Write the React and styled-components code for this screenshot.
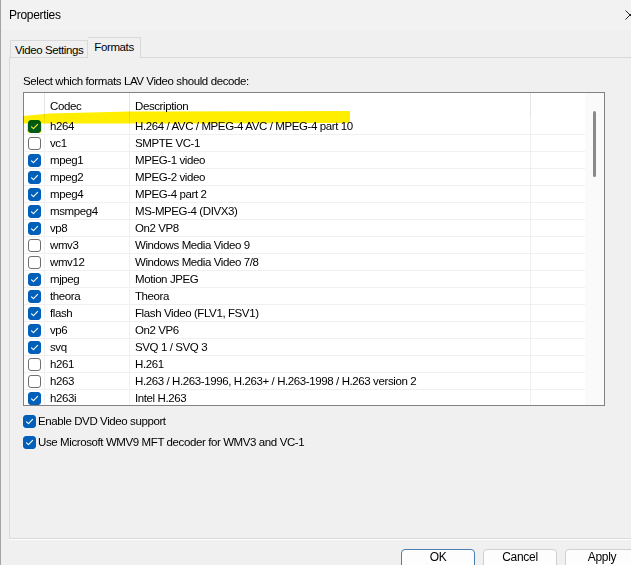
import React from "react";
import styled, { createGlobalStyle } from "styled-components";

const Global = createGlobalStyle`
  html, body { margin: 0; padding: 0; background: #f0f0f0; overflow: hidden; }
  body { font-family: "Liberation Sans", Arial, sans-serif; font-size: 11.5px; letter-spacing: -0.4px; color: #000; }
  * { box-sizing: border-box; }
`;

const Page = styled.div`
  position: relative;
  width: 631px;
  height: 565px;
`;

const Window = styled.div`
  width: 631px;
  height: 565px;
  background: #f0f0f0;
  border-left: 1px solid #a3a3a3;
  display: flex;
  flex-direction: column;
  & > * { flex-shrink: 0; }
`;

const TitleBar = styled.div`
  height: 30px;
  display: flex;
  align-items: center;
  padding-left: 8px;
  background: #f2f2f2;
`;

const Title = styled.span`
  flex: 1;
  font-size: 12px;
  letter-spacing: -0.3px;
`;

const Close = styled.svg`
  width: 10px;
  height: 10px;
  margin-right: -4px;
  margin-top: -1px;
`;

const Body = styled.div`
  padding-left: 8px;
  display: flex;
  flex-direction: column;
  & > * { flex-shrink: 0; }
`;

const TabStrip = styled.div`
  height: 27px;
  display: flex;
  align-items: flex-end;
  padding-left: 1px;
`;

const Tab = styled.div`
  height: ${(p) => (p.$active ? "21px" : "17px")};
  margin-bottom: ${(p) => (p.$active ? "-1px" : "0")};
  padding: ${(p) => (p.$active ? "2px 6px 0 6px" : "2px 4px 0 4px")};
  border: 1px solid #d9d9d9;
  border-bottom: none;
  border-left: ${(p) => (p.$active ? "none" : "1px solid #d9d9d9")};
  background: #f0f0f0;
  position: relative;
  z-index: 1;
  line-height: 14px;
`;

const Panel = styled.div`
  height: 482px;
  margin-right: -20px;
  border: 1px solid #d9d9d9;
  background: #f0f0f0;
  box-shadow: 0 1px 0 #ffffff;
  padding: 15px 0 0 13px;
  display: flex;
  flex-direction: column;
  & > * { flex-shrink: 0; }
`;

const Label = styled.div`
  line-height: 16px;
  margin-bottom: 3px;
`;

const ListBox = styled.div`
  width: 582px;
  height: 314px;
  border: 1px solid #828282;
  background: #fff;
  display: flex;
  overflow: hidden;
`;

const GridArea = styled.div`
  width: 561px;
  display: flex;
  flex-direction: column;
`;

const Row = styled.div`
  display: grid;
  grid-template-columns: 21px 85px 401px 54px;
  height: ${(p) => (p.$header ? "25px" : "17px")};
  flex: none;
  border-bottom: ${(p) => (p.$header ? "none" : "1px solid #f0f0f0")};
`;

const Cell = styled.div`
  display: flex;
  align-items: center;
  justify-content: ${(p) => (p.$center ? "center" : "flex-start")};
  padding-left: ${(p) => (p.$center ? "0" : "5px")};
  border-right: ${(p) => (p.$last ? "none" : `1px solid ${p.$header ? "#e5e5e5" : "#f0f0f0"}`)};
  white-space: nowrap;
  overflow: hidden;
  line-height: 16px;
`;

const Scrollbar = styled.div`
  width: 19px;
  background: #fafafa;
  display: flex;
  flex-direction: column;
`;

const Thumb = styled.div`
  width: 3px;
  height: 66px;
  margin: 18px 0 0 8px;
  border-radius: 2px;
  background: #8a8a8a;
`;

const Box = styled.span`
  width: 13px;
  height: 13px;
  border-radius: 3px;
  flex: none;
  display: inline-flex;
  align-items: center;
  justify-content: center;
  background: ${(p) => (p.$checked ? "#005fb8" : "#ffffff")};
  border: 1px solid ${(p) => (p.$checked ? "#005fb8" : "#6f6f6f")};
`;

const Options = styled.div`
  display: flex;
  flex-direction: column;
  gap: 5px;
  margin-top: 7px;
`;

const Option = styled.label`
  display: flex;
  align-items: center;
  gap: 2px;
  height: 16px;
  line-height: 16px;
`;

const Footer = styled.div`
  display: flex;
  justify-content: flex-end;
  gap: 8px;
  padding-top: 10px;
  margin-right: -8px;
`;

const Button = styled.button`
  width: 74px;
  height: 24px;
  border-radius: 4px;
  background: #fdfdfd;
  border: 1px solid ${(p) => (p.$default ? "#4a7fb0" : "#d0d0d0")};
  font-family: inherit;
  font-size: 12px;
  letter-spacing: -0.3px;
  line-height: 14px;
  color: #000;
  padding: 0;
  display: flex;
  align-items: flex-start;
  justify-content: center;
`;

const Highlight = styled.svg`
  position: absolute;
  left: 0;
  top: 0;
  pointer-events: none;
  mix-blend-mode: multiply;
`;

function Check({ checked }) {
  return (
    <Box $checked={checked}>
      {checked && (
        <svg width="9" height="9" viewBox="0 0 9 9">
          <path d="M1.5 4.8 L3.5 6.7 L7.6 2.4" fill="none" stroke="#fff" strokeWidth="1.1" strokeLinecap="round" strokeLinejoin="round" />
        </svg>
      )}
    </Box>
  );
}

const formats = [
  ["h264", true, "H.264 / AVC / MPEG-4 AVC / MPEG-4 part 10"],
  ["vc1", false, "SMPTE VC-1"],
  ["mpeg1", true, "MPEG-1 video"],
  ["mpeg2", true, "MPEG-2 video"],
  ["mpeg4", true, "MPEG-4 part 2"],
  ["msmpeg4", true, "MS-MPEG-4 (DIVX3)"],
  ["vp8", true, "On2 VP8"],
  ["wmv3", false, "Windows Media Video 9"],
  ["wmv12", false, "Windows Media Video 7/8"],
  ["mjpeg", true, "Motion JPEG"],
  ["theora", true, "Theora"],
  ["flash", true, "Flash Video (FLV1, FSV1)"],
  ["vp6", true, "On2 VP6"],
  ["svq", true, "SVQ 1 / SVQ 3"],
  ["h261", false, "H.261"],
  ["h263", false, "H.263 / H.263-1996, H.263+ / H.263-1998 / H.263 version 2"],
  ["h263i", true, "Intel H.263"],
];

export default function App() {
  return (
    <Page>
      <Global />
      <Window>
        <TitleBar>
          <Title>Properties</Title>
          <Close viewBox="0 0 10 10">
            <path d="M0.5 0.5 L9.5 9.5 M9.5 0.5 L0.5 9.5" stroke="#222" strokeWidth="1" />
          </Close>
        </TitleBar>
        <Body>
          <TabStrip>
            <Tab>Video Settings</Tab>
            <Tab $active>Formats</Tab>
          </TabStrip>
          <Panel>
            <Label>Select which formats LAV Video should decode:</Label>
            <ListBox>
              <GridArea>
                <Row $header>
                  <Cell $header $center />
                  <Cell $header>Codec</Cell>
                  <Cell $header>Description</Cell>
                  <Cell $header $last />
                </Row>
                {formats.map(([codec, on, desc]) => (
                  <Row key={codec}>
                    <Cell $center>
                      <Check checked={on} />
                    </Cell>
                    <Cell>{codec}</Cell>
                    <Cell>{desc}</Cell>
                    <Cell $last />
                  </Row>
                ))}
              </GridArea>
              <Scrollbar>
                <Thumb />
              </Scrollbar>
            </ListBox>
            <Options>
              <Option>
                <Check checked />
                Enable DVD Video support
              </Option>
              <Option>
                <Check checked />
                Use Microsoft WMV9 MFT decoder for WMV3 and VC-1
              </Option>
            </Options>
          </Panel>
          <Footer>
            <Button $default>OK</Button>
            <Button>Cancel</Button>
            <Button>Apply</Button>
          </Footer>
        </Body>
      </Window>
      <Highlight width="631" height="565" viewBox="0 0 631 565">
        <polygon
          points="23,116 50,113.5 130,111.5 350,111 350,123 200,123.5 130,123.5 60,123.5 23,123.5"
          fill="#ffee00"
        />
        <rect x="27" y="123" width="15" height="10" rx="2" fill="#ffee00" opacity="0.85" />
      </Highlight>
    </Page>
  );
}
